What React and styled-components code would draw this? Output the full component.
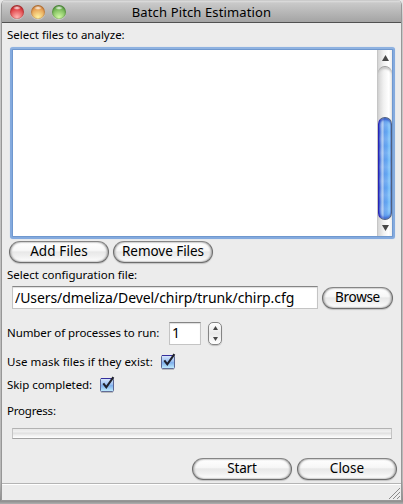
import React from "react";
import styled, { createGlobalStyle } from "styled-components";

const GlobalStyle = createGlobalStyle`
  * { box-sizing: border-box; }
  html, body { margin: 0; padding: 0; overflow: hidden; background: #a9a9a9; }
  body { font-family: "Noto Sans", "Open Sans", sans-serif; color: #000; }
  button, input { font-family: inherit; color: inherit; margin: 0; }
`;

const Desktop = styled.div`
  width: 403px;
  height: 504px;
  padding: 0 1px 3px;
  background: linear-gradient(180deg, #e8e8e8 0, #c8c8c8 20px, #b8b8b8 480px, #8c8c8c 501px, #b0b0b0 504px);
`;

const Window = styled.main`
  display: flex;
  flex-direction: column;
  width: 401px;
  height: 501px;
  border: solid #979797;
  border-width: 0 1px 1px;
  border-radius: 5px 5px 0 0;
  background: #ececec;
  overflow: hidden;
`;

const TitleBar = styled.header`
  display: grid;
  grid-template-columns: 62px 1fr 62px;
  align-items: center;
  height: 23px;
  flex: none;
  border-bottom: 1px solid #515151;
  background: linear-gradient(180deg, #b8b8b8 0, #dedede 1px, #c9c9c9 3px, #a4a4a4 22px);
`;

const Lights = styled.div`
  display: flex;
  gap: 7px;
  padding: 2px 0 0 8px;
`;

const Light = styled.span`
  flex: none;
  width: 14px;
  height: 14px;
  border-radius: 50%;
  background:
    radial-gradient(ellipse 4px 2px at 50% 20%, #ffffffe0 0, #ffffff80 60%, transparent 100%),
    radial-gradient(circle at 50% 88%, ${(p) => p.$glow} 0, ${(p) => p.$color} 70%);
  box-shadow: inset 0 1px 2px ${(p) => p.$rim}, inset 0 0 1px ${(p) => p.$rim}, 0 1px 0 #ffffff60;
`;

const Title = styled.h1`
  margin: 0;
  padding-top: 2px;
  font-size: 13px;
  line-height: 18px;
  font-weight: 400;
  text-align: center;
  white-space: nowrap;
  letter-spacing: 0.13px;
`;

const Label = styled.label`
  flex: none;
  width: ${(p) => (p.$w ? `${p.$w}px` : "auto")};
  font-size: 11.5px;
  line-height: 16px;
  white-space: nowrap;
  letter-spacing: ${(p) => p.$track || 0}px;
`;

const Row = styled.div`
  display: flex;
  align-items: center;
  flex: none;
  height: ${(p) => p.$h}px;
  gap: ${(p) => p.$gap || 0}px;
  padding: 0 0 ${(p) => p.$bottom || 0}px ${(p) => (p.$left === undefined ? 5 : p.$left)}px;
`;

const FileList = styled.section`
  display: flex;
  flex: none;
  width: 385px;
  height: 192px;
  margin-left: 8px;
  padding: 1px;
  border: 2px solid #84aade;
  border-top-color: #8fb2e0;
  border-radius: 3px;
  background: #6f98cf;
  box-shadow: 0 0 1px #a9c6ee;
`;

const Files = styled.div`
  flex: 1;
  background: #fff;
`;

const ScrollBar = styled.div`
  display: flex;
  flex-direction: column;
  width: 15px;
  border-left: 1px solid #c6c6c6;
  background: linear-gradient(90deg, #d4d4d4, #f1f1f1 40%, #fff 75%, #eee);
`;

const ArrowCell = styled.div`
  display: grid;
  place-items: center;
  height: 16px;
  flex: none;
`;

const Groove = styled.div`
  display: flex;
  align-items: flex-end;
  flex: 1;
  border-top: 1px solid #9c9c9c;
  border-radius: 7px 7px 0 0;
  box-shadow: inset 0 2px 2px #c8c8c8;
`;

const Thumb = styled.div`
  width: 14px;
  height: 103px;
  border: 1px solid #4f5f80;
  border-left-color: #2923b4;
  border-radius: 7px;
  background:
    repeating-linear-gradient(180deg, #ffffff00 0, #ffffff24 7px, #ffffff00 14px),
    linear-gradient(90deg, #3148d0 0, #7fa9e8 2px, #b4cff5 4px, #619ceb 5px, #62a6f2 8px, #8dd2ff 11px, #6a9cd8 12px);
  box-shadow: inset 0 2px 2px #2943bdb0, inset 0 -2px 2px #2943bd90;
`;

const PushButton = styled.button`
  width: ${(p) => p.$w}px;
  height: 22px;
  padding: 0 0 1px;
  border: 1px solid #6d6d6d;
  border-top-color: #858585;
  border-radius: 11px;
  background: linear-gradient(180deg, #fff 0, #f7f7f7 42%, #e8e8e8 50%, #f0f0f0 72%, #fff 100%);
  box-shadow: inset 1px 0 2px #a5a5a5, inset -1px 0 2px #a5a5a5, 0 1px 1px #c2c2c2;
  font-size: 13.5px;
  line-height: 19px;
  white-space: nowrap;
  letter-spacing: ${(p) => p.$track || 0}px;
`;

const Field = styled.input`
  width: ${(p) => p.$w}px;
  height: 23px;
  padding: 0 0 1px 2px;
  border: 1px solid #c4c4c4;
  border-top-color: #858585;
  border-radius: 0;
  outline: 0;
  background: #fff;
  box-shadow: inset 0 1px 1px #ddd;
  font-size: 14px;
  letter-spacing: ${(p) => p.$track || 0}px;
`;

const Stepper = styled.div`
  display: flex;
  flex-direction: column;
  align-items: center;
  justify-content: space-between;
  width: 14px;
  height: 23px;
  margin-left: 7px;
  padding: 3px 0;
  border: 1px solid #858585;
  border-radius: 5px;
  background: linear-gradient(180deg, #fff, #e9e9e9 50%, #fff);
  box-shadow: 0 1px 1px #c0c0c0;
`;

const CheckSvg = styled.svg`
  display: block;
  overflow: visible;
`;

const ProgressTrack = styled.div`
  width: 380px;
  height: 11px;
  border: 1px solid #c4c4c4;
  border-top-color: #b2b2b2;
  border-bottom-color: #a2a2a2;
  background: linear-gradient(180deg, #e8e8e8 0, #f0f0f0 3px, #dedede 4px, #eee 6px, #fff 9px);
`;

const StatusBar = styled.footer`
  display: flex;
  align-items: flex-end;
  justify-content: flex-end;
  flex: 1;
  border-top: 1px solid #b4b4b4;
  box-shadow: inset 0 1px 0 #fff;
`;

const Arrow = ({ down, w = 7, h = 6 }) => (
  <svg width={w} height={h} viewBox="0 0 7 6" preserveAspectRatio="none">
    <path d={down ? "M0 0H7L3.5 6Z" : "M0 6H7L3.5 0Z"} fill="#484848" />
  </svg>
);

const CheckBox = ({ id }) => (
  <CheckSvg width="15" height="16" viewBox="0 0 15 16" role="checkbox" aria-checked="true">
    <defs>
      <linearGradient id={id} x1="0" y1="0" x2="0" y2="1">
        <stop offset="0" stopColor="#dbe8fc" />
        <stop offset=".45" stopColor="#9dc2f2" />
        <stop offset=".55" stopColor="#7fb0ec" />
        <stop offset="1" stopColor="#c4f0ff" />
      </linearGradient>
    </defs>
    <rect x=".5" y="1.5" width="13" height="13" rx="1" fill={`url(#${id})`} stroke="#5c6795" />
    <path d="M1 1.5H13" stroke="#352f9c" />
    <path d="M1 15.4H13" stroke="#aaa" strokeWidth=".8" />
    <path d="M3.3 6.3L6.3 10.3L13.4 .2" fill="none" stroke="#20222d" strokeWidth="2.1" />
  </CheckSvg>
);

export default function App() {
  return (
    <>
      <GlobalStyle />
      <Desktop>
        <Window>
          <TitleBar>
            <Lights>
              <Light $rim="#8c2d2d" $color="#dc3036" $glow="#ffb8b4" />
              <Light $rim="#9a602c" $color="#e3954a" $glow="#fff3a0" />
              <Light $rim="#417333" $color="#68ad4b" $glow="#d3fba5" />
            </Lights>
            <Title>Batch Pitch Estimation</Title>
          </TitleBar>
          <Row $h={24}><Label>Select files to analyze:</Label></Row>
          <FileList>
            <Files />
            <ScrollBar>
              <ArrowCell><Arrow /></ArrowCell>
              <Groove><Thumb /></Groove>
              <ArrowCell><Arrow down /></ArrowCell>
            </ScrollBar>
          </FileList>
          <Row $h={26} $left={7} $gap={4} $bottom={1}>
            <PushButton $w={100} $track={0.1}>Add Files</PushButton>
            <PushButton $w={100} $track={-0.05}>Remove Files</PushButton>
          </Row>
          <Row $h={21} $bottom={1}><Label>Select configuration file:</Label></Row>
          <Row $h={23} $left={10} $gap={4}>
            <Field $w={306} $track={-0.08} defaultValue="/Users/dmeliza/Devel/chirp/trunk/chirp.cfg" />
            <PushButton $w={71} $track={-0.3}>Browse</PushButton>
          </Row>
          <Row $h={48}>
            <Label $w={162} $track={-0.08}>Number of processes to run:</Label>
            <Field $w={32} defaultValue="1" />
            <Stepper><Arrow w={5} h={4} /><Arrow down w={5} h={4} /></Stepper>
          </Row>
          <Row $h={10}><Label $w={154} $track={0.05}>Use mask files if they exist:</Label><CheckBox id="mask" /></Row>
          <Row $h={35}><Label $w={93} $track={-0.06}>Skip completed:</Label><CheckBox id="skip" /></Row>
          <Row $h={18}><Label $track={-0.2}>Progress:</Label></Row>
          <Row $h={34} $left={10} $bottom={7}><ProgressTrack /></Row>
          <Row $h={29} $left={190} $gap={5}>
            <PushButton $w={100} $track={-0.2}>Start</PushButton>
            <PushButton $w={100}>Close</PushButton>
          </Row>
          <StatusBar>
            <svg width="13" height="13" viewBox="0 0 13 13">
              <path d="M1 12L12 1M5 12L12 5M9 12L12 9" stroke="#8a8a8a" />
            </svg>
          </StatusBar>
        </Window>
      </Desktop>
    </>
  );
}
